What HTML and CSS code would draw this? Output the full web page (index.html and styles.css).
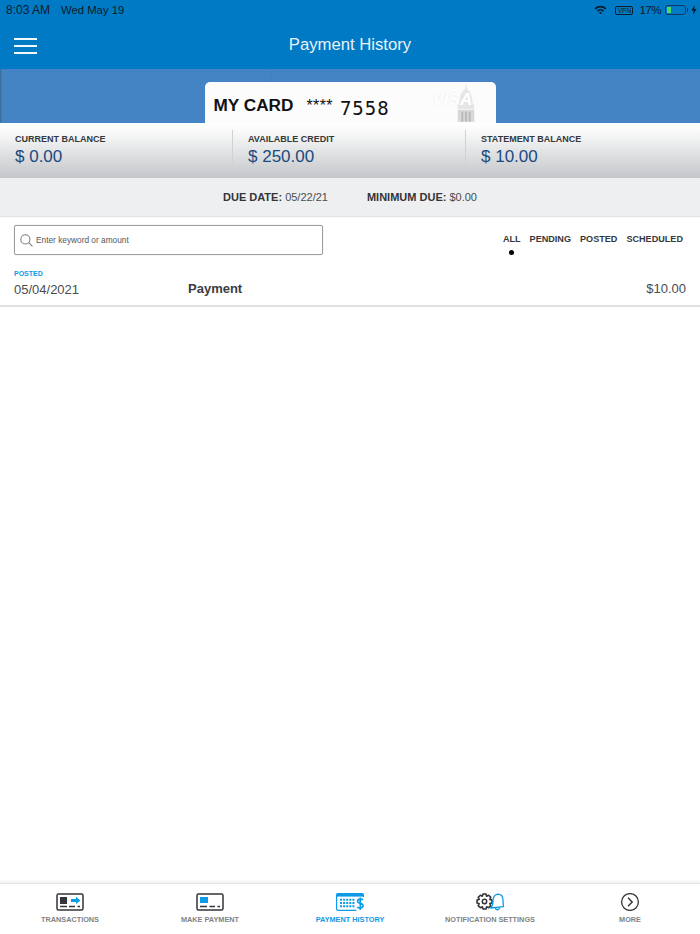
FILE: index.html
```html
<!DOCTYPE html>
<html lang="en">
<head>
  <meta charset="UTF-8">
  <title>Payment History</title>
  <meta name="viewport" content="width=device-width, initial-scale=1">
  <link rel="stylesheet" href="styles.css">
</head>
<body>
  <header class="top">
    <div class="status">
      <span class="status-time">8:03 AM</span>
      <span class="status-date">Wed May 19</span>
      <span class="status-right">
        <svg class="wifi" width="13" height="10" viewBox="0 0 14 11">
          <path d="M0.5 3.6 A9.2 9.2 0 0 1 13.5 3.6 L12.1 5 A7.2 7.2 0 0 0 1.9 5 Z" fill="#0b1b2b"/>
          <path d="M3 6.1 A5.6 5.6 0 0 1 11 6.1 L9.6 7.5 A3.6 3.6 0 0 0 4.4 7.5 Z" fill="#0b1b2b"/>
          <path d="M5.4 8.5 A2.3 2.3 0 0 1 8.6 8.5 L7 10.2 Z" fill="#0b1b2b"/>
        </svg>
        <span class="vpn">VPN</span>
        <span class="battery-pct">17%</span>
        <span class="battery"><span class="battery-fill"></span></span>
        <span class="battery-nub"></span>
        <svg class="bolt" width="6" height="10" viewBox="0 0 6 10"><path d="M3.8 0 L0.4 5.6 H2.6 L2 10 L5.6 4 H3.3 Z" fill="#0b1b2b"/></svg>
      </span>
    </div>
    <div class="nav">
      <button class="menu" type="button" aria-label="Menu"><span></span><span></span><span></span></button>
      <h1>Payment History</h1>
    </div>
  </header>

  <section class="card-band">
    <div class="card">
      <span class="card-name">MY CARD</span>
      <span class="card-stars">****</span>
      <span class="card-digits">7558</span>
      <svg class="dome" width="22" height="41" viewBox="0 0 24 42">
        <path d="M12 0 L13 6 C17 9 19 14 19 21 L21 24 V28 H3 V24 L5 21 C5 14 7 9 11 6 Z" fill="#e6e6e6"/>
        <path d="M3 29 H21 V42 H3 Z" fill="#d8d8d8"/>
        <path d="M7 31 H9 V42 H7 Z M11 31 H13 V42 H11 Z M15 31 H17 V42 H15 Z" fill="#b8b8b8"/>
      </svg>
      <span class="card-visa">VISA</span>
    </div>
  </section>

  <section class="balances">
    <div class="balance">
      <div class="balance-label">CURRENT BALANCE</div>
      <div class="balance-value">$ 0.00</div>
    </div>
    <div class="balance">
      <div class="balance-label">AVAILABLE CREDIT</div>
      <div class="balance-value">$ 250.00</div>
    </div>
    <div class="balance">
      <div class="balance-label">STATEMENT BALANCE</div>
      <div class="balance-value">$ 10.00</div>
    </div>
  </section>

  <section class="due">
    <span><b>DUE DATE:</b> 05/22/21</span>
    <span><b>MINIMUM DUE:</b> $0.00</span>
  </section>

  <main class="content">
    <div class="tools">
      <label class="search">
        <svg width="13" height="13" viewBox="0 0 14 14" fill="none" stroke="#77797c" stroke-width="1.1">
          <circle cx="5.8" cy="5.8" r="4.9"/>
          <path d="M9.4 9.4 L13.4 13.4"/>
        </svg>
        <span>Enter keyword or amount</span>
      </label>
      <nav class="filters">
        <a class="filter active">ALL</a>
        <a class="filter">PENDING</a>
        <a class="filter">POSTED</a>
        <a class="filter">SCHEDULED</a>
      </nav>
    </div>

    <div class="record">
      <div class="record-date">
        <div class="record-status">POSTED</div>
        <div>05/04/2021</div>
      </div>
      <div class="record-name">Payment</div>
      <div class="record-amount">$10.00</div>
    </div>
  </main>

  <footer class="tabs">
    <a class="tab">
      <svg width="28" height="18" viewBox="0 0 28 18">
        <rect x="1" y="1" width="26" height="16" rx="1.5" fill="none" stroke="#333538" stroke-width="1.5"/>
        <rect x="4" y="4" width="7" height="7" fill="#333538"/>
        <path d="M15 6 H20 V3.8 L24.5 7.5 L20 11 V9 H15 Z" fill="#0d9be8"/>
        <path d="M4 13.5 H11 M13 13.5 H19 M21.5 13.5 H24" stroke="#333538" stroke-width="1.3"/>
      </svg>
      <span>TRANSACTIONS</span>
    </a>
    <a class="tab">
      <svg width="28" height="18" viewBox="0 0 28 18">
        <rect x="1" y="1" width="26" height="16" rx="1.5" fill="none" stroke="#333538" stroke-width="1.5"/>
        <rect x="4" y="4" width="8" height="6" fill="#0d9be8"/>
        <path d="M4 13.5 H11 M13.5 13.5 H19 M21.5 13.5 H24" stroke="#333538" stroke-width="1.3"/>
      </svg>
      <span>MAKE PAYMENT</span>
    </a>
    <a class="tab tab-active">
      <svg width="28" height="18" viewBox="0 0 28 18">
        <rect x="0.6" y="0.6" width="26.8" height="16.8" rx="1.5" fill="none" stroke="#0d9be8" stroke-width="1.2"/>
        <rect x="0.6" y="0.6" width="26.8" height="3" fill="#0d9be8"/>
        <path d="M4 6.8 H19 M4 10 H19 M4 13.2 H19" stroke="#0d9be8" stroke-width="2" stroke-dasharray="2 1.1"/>
        <rect x="20.4" y="4" width="7.6" height="14" fill="#fff"/>
        <path d="M27 6.8 C26 5.8 21.6 5.6 21.6 8.2 C21.6 11 27 9.8 27 12.8 C27 15.6 22.4 15.2 21.2 14.2 M24.3 4.4 V17" fill="none" stroke="#0d9be8" stroke-width="1.7"/>
      </svg>
      <span>PAYMENT HISTORY</span>
    </a>
    <a class="tab">
      <svg width="28" height="18" viewBox="0 0 28 18">
        <path d="M7 1 H10 L10.6 3.2 L12.6 2.2 L14.8 4.4 L13.8 6.4 L16 7 V10 L13.8 10.6 L14.8 12.6 L12.6 14.8 L10.6 13.8 L10 16 H7 L6.4 13.8 L4.4 14.8 L2.2 12.6 L3.2 10.6 L1 10 V7 L3.2 6.4 L2.2 4.4 L4.4 2.2 L6.4 3.2 Z" fill="#fff" stroke="#333538" stroke-width="1.6" stroke-linejoin="round"/>
        <circle cx="8.5" cy="8.5" r="2.2" fill="none" stroke="#333538" stroke-width="1.5"/>
        <path d="M21.5 1.2 C25.6 1.2 27 4 27 7 C27 10 27.2 12 27.6 13.6 L14.6 15 C16.4 13.4 17 11.4 17 8 C17 4.6 18.2 2 21.5 1.2 Z" fill="#fff" stroke="#0d9be8" stroke-width="1.3" stroke-linejoin="round"/>
        <path d="M19.4 15 C20 17.4 23 17.4 23.6 14.6" fill="none" stroke="#0d9be8" stroke-width="1.3"/>
      </svg>
      <span>NOTIFICATION SETTINGS</span>
    </a>
    <a class="tab">
      <svg width="28" height="18" viewBox="0 0 28 18" fill="none" stroke="#333538" stroke-width="1.3">
        <circle cx="14" cy="9" r="8.4"/>
        <path d="M12 4.8 L16.2 9 L12 13.2" stroke-width="1.4"/>
      </svg>
      <span>MORE</span>
    </a>
  </footer>
</body>
</html>
```

FILE: styles.css
```css
* {
  box-sizing: border-box;
}
html, body {
  height: 100%;
}
body {
  margin: 0;
  display: flex;
  flex-direction: column;
  min-height: 934px;
  background: #fff;
  color: #333538;
  font-family: "Liberation Sans", Arial, sans-serif;
  overflow: hidden;
}

/* blue top */
.top {
  height: 69px;
  background: #007ac5;
}
.status {
  display: flex;
  align-items: center;
  height: 20px;
  padding: 0 3px 0 6px;
  font-size: 12px;
  color: #0b1b2b;
}
.status-date {
  margin-left: 11px;
  font-size: 11.3px;
}
.status-right {
  display: flex;
  align-items: center;
  margin-left: auto;
}
.vpn {
  margin-left: 8px;
  height: 9px;
  width: 18px;
  border: 1px solid #0b1b2b;
  border-radius: 2px;
  font-size: 6.5px;
  line-height: 7px;
  text-align: center;
}
.battery-pct {
  margin-left: 6px;
  font-size: 11.5px;
  letter-spacing: -0.5px;
}
.battery {
  margin-left: 4px;
  width: 21px;
  height: 10px;
  padding: 1px;
  border: 1px solid #0b3a63;
  border-radius: 3px;
}
.battery-fill {
  display: block;
  width: 4px;
  height: 100%;
  background: #4cd964;
}
.battery-nub {
  width: 1px;
  height: 4px;
  margin-left: 1px;
  background: #0b3a63;
}
.bolt {
  margin-left: 3px;
}
.nav {
  position: relative;
  height: 49px;
  display: flex;
  align-items: center;
  justify-content: center;
}
.nav h1 {
  margin: 0;
  font-size: 16.7px;
  font-weight: normal;
  color: #e8f3fa;
}
.menu {
  position: absolute;
  left: 14px;
  top: 18px;
  width: 23px;
  padding: 0;
  background: none;
  border: none;
}
.menu span {
  display: block;
  height: 2px;
  margin-bottom: 5px;
  background: #f2f7fb;
}

/* card strip */
.card-band {
  height: 54px;
  display: flex;
  justify-content: center;
  align-items: flex-end;
  background: linear-gradient(90deg, #3f6f9f 0, #3f6f9f 1px, #4484c4 2px, #4484c4 271px, #3f7dbd 271px, #4484c4 272px);
}
.card {
  position: relative;
  width: 291px;
  height: 41px;
  padding: 11px 0 0 9px;
  background: #fcfcfc;
  border-radius: 5px 5px 0 0;
  display: flex;
  align-items: baseline;
  overflow: hidden;
  color: #111;
}
.card-name {
  font-size: 17.2px;
  font-weight: bold;
}
.card-stars {
  margin-left: 13px;
  font-size: 16px;
  letter-spacing: 0.4px;
}
.card-digits {
  margin-left: 7px;
  font-family: "DejaVu Sans Mono", monospace;
  font-size: 19px;
  letter-spacing: 1px;
  position: relative;
  top: 4px;
}
.dome {
  position: absolute;
  right: 19px;
  top: 0;
}
.card-visa {
  position: absolute;
  left: 228px;
  top: 8px;
  font-size: 17px;
  font-weight: bold;
  font-style: italic;
  color: #fff;
  text-shadow: 0 0 2px #e6e6e6;
}

/* balances */
.balances {
  height: 55px;
  display: grid;
  grid-template-columns: 233px 233px 234px;
  padding-top: 7px;
  background: linear-gradient(180deg, #fff 0, #fafafa 15%, #c3c6c9 100%);
}
.balance {
  height: 42px;
  padding: 3px 0 0 15px;
  border-right: 1px solid #d0d2d4;
}
.balance:last-child {
  border-right: none;
}
.balance-label {
  font-size: 9px;
  line-height: 12px;
  font-weight: bold;
  color: #35383b;
}
.balance-value {
  margin-top: 1px;
  font-size: 17px;
  line-height: 21px;
  color: #1a4a80;
}

/* due */
.due {
  height: 38px;
  display: flex;
  align-items: center;
  justify-content: center;
  gap: 39px;
  background: #eeeff1;
  box-shadow: 0 1px 1px #e2e3e5;
  font-size: 11px;
  color: #4a4c4f;
}
.due b {
  color: #333538;
}

/* list */
.content {
  flex: 1;
}
.tools {
  display: flex;
  justify-content: space-between;
  padding: 9px 17px 0 14px;
}
.search {
  display: flex;
  align-items: center;
  gap: 3px;
  width: 309px;
  height: 30px;
  padding-left: 5px;
  border: 1px solid #9a9c9e;
  border-radius: 2px;
  box-shadow: 0 0 1px #bbb;
  font-size: 8.3px;
  color: #55575a;
}
.filters {
  display: flex;
  gap: 9px;
  padding-top: 9px;
}
.filter {
  position: relative;
  font-size: 9.1px;
  line-height: 11px;
  font-weight: bold;
  color: #35383b;
}
.filter.active::after {
  content: "";
  position: absolute;
  left: 50%;
  top: 16px;
  width: 5px;
  height: 5px;
  margin-left: -2.5px;
  border-radius: 50%;
  background: #000;
}
.record {
  display: grid;
  grid-template-columns: 174px 1fr auto;
  align-items: end;
  height: 52px;
  padding: 0 14px 8px;
  border-bottom: 2px solid #dfe0e1;
}
.record-status {
  margin-bottom: 4px;
  font-size: 7px;
  line-height: 9px;
  font-weight: bold;
  color: #0d9be8;
}
.record-date {
  font-size: 13px;
  line-height: 15px;
  color: #4a4c4f;
}
.record-name {
  padding-bottom: 1px;
  font-size: 13px;
  line-height: 15px;
  font-weight: bold;
  color: #3a3c3f;
}
.record-amount {
  padding-bottom: 1px;
  font-size: 13px;
  line-height: 15px;
  color: #4a4c4f;
}

/* bottom tabs */
.tabs {
  height: 51px;
  display: grid;
  grid-template-columns: repeat(5, 140px);
  padding-top: 9px;
  border-top: 1px solid #e6e6e6;
  box-shadow: 0 -2px 2px #f0f0f0;
}
.tab {
  display: flex;
  flex-direction: column;
  align-items: center;
  gap: 4px;
  font-size: 7.3px;
  line-height: 9px;
  font-weight: bold;
  color: #808284;
}
.tab-active {
  color: #0d9be8;
}
```
